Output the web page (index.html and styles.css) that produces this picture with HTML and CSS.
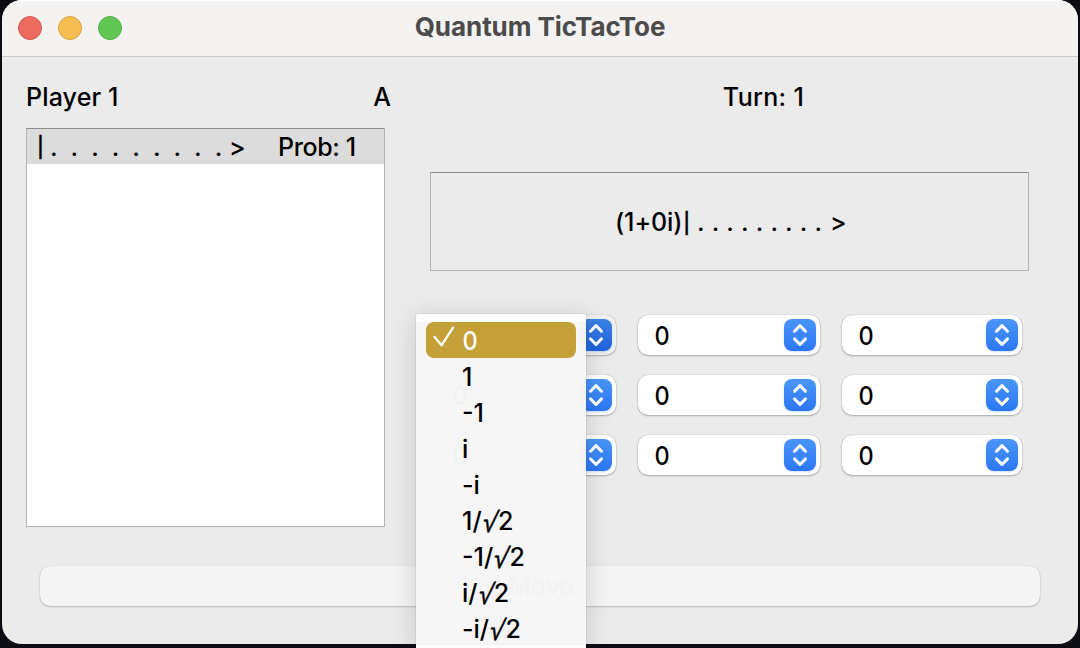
FILE: index.html
```html
<!DOCTYPE html>
<html lang="en">
<head>
<meta charset="utf-8">
<title>Quantum TicTacToe</title>
<link rel="stylesheet" href="styles.css">
</head>
<body>
<svg class="defs" width="0" height="0">
  <symbol id="arrows" viewBox="0 0 32 32">
    <path d="M10.5 12.2 L16 6.6 L21.5 12.2 M10.5 19.9 L16 25.5 L21.5 19.9"/>
  </symbol>
</svg>
<div class="window">
  <header class="titlebar">
    <div class="lights">
      <span class="light red"></span>
      <span class="light yellow"></span>
      <span class="light green"></span>
    </div>
    <h1 class="title">Quantum TicTacToe</h1>
  </header>
  <main class="content">
    <section class="left">
      <div class="labels"><span class="player">Player 1</span><span class="mark">A</span></div>
      <div class="list">
        <div class="row"><span class="bar">|</span><span class="dots">.........</span><span class="gt">&gt;</span><span class="prob">Prob: 1</span></div>
      </div>
    </section>
    <section class="right">
      <div class="turn">Turn: 1</div>
      <div class="state"><span class="amp">(1+0i)<span class="pipe">|</span></span><span class="state-dots">.........</span><span class="gt">&gt;</span></div>
      <div class="grid">
        <div class="combo pressed"><span class="value">0</span><svg class="step"><use href="#arrows"/></svg></div>
        <div class="combo"><span class="value">0</span><svg class="step"><use href="#arrows"/></svg></div>
        <div class="combo"><span class="value">0</span><svg class="step"><use href="#arrows"/></svg></div>
        <div class="combo"><span class="value">0</span><svg class="step"><use href="#arrows"/></svg></div>
        <div class="combo"><span class="value">0</span><svg class="step"><use href="#arrows"/></svg></div>
        <div class="combo"><span class="value">0</span><svg class="step"><use href="#arrows"/></svg></div>
        <div class="combo"><span class="value">0</span><svg class="step"><use href="#arrows"/></svg></div>
        <div class="combo"><span class="value">0</span><svg class="step"><use href="#arrows"/></svg></div>
        <div class="combo"><span class="value">0</span><svg class="step"><use href="#arrows"/></svg></div>
      </div>
    </section>
  </main>
  <div class="move"></div>
</div>
<div class="menu">
  <div class="item selected"><svg class="check" viewBox="0 0 24 24"><path d="M3.5 13 L10.5 21.3 L22 3.6"/></svg><span class="zero">0</span></div>
  <div class="item">1</div>
  <div class="item">-1</div>
  <div class="item">i</div>
  <div class="item">-i</div>
  <div class="item">1/<span class="root">√</span>2</div>
  <div class="item">-1/<span class="root">√</span>2</div>
  <div class="item">i/<span class="root">√</span>2<span class="ghost">Move</span></div>
  <div class="item">-i/<span class="root">√</span>2</div>
</div>
</body>
</html>
```
FILE: styles.css
```css
* { box-sizing: border-box; }
html, body { margin: 0; height: 100%; }
body {
  width: 1080px;
  height: 648px;
  overflow: hidden;
  position: relative;
  padding: 0 2px 4px;
  background: #0b0d12;
  font-family: Inter, "Liberation Sans", sans-serif;
  font-size: 25px;
  font-weight: 500;
  line-height: 30px;
  color: #000;
}
.defs { position: absolute; }
.window {
  height: 644px;
  border-radius: 20px;
  background: #ebebeb;
  overflow: hidden;
}
.titlebar {
  height: 57px;
  display: grid;
  grid-template-columns: 160px 1fr 160px;
  background: #f4f3f1;
  border-top: 1px solid #fff;
  border-bottom: 1px solid #c8c8c8;
}
.lights { display: flex; gap: 16px; padding: 15px 0 0 16px; }
.light { width: 24px; height: 24px; border-radius: 50%; border: 1px solid; }
.red { background: #ed6a5f; border-color: #d9574d; }
.yellow { background: #f6be50; border-color: #dba43c; }
.green { background: #62c655; border-color: #4fae43; }
.title {
  margin: 0;
  padding-top: 11px;
  font-size: 26px;
  font-weight: 700;
  line-height: 30px;
  text-align: center;
  color: #4b4b4b;
  letter-spacing: -0.05px;
}
.content { display: flex; gap: 45px; height: 509px; padding: 25px 49px 0 24px; }
.left { width: 359px; }
.labels { display: flex; justify-content: space-between; height: 46px; }
.player { letter-spacing: 0.15px; }
.mark { margin-right: -6px; }
.list {
  height: 399px;
  background: #fff;
  border: 1px solid #b4b4b4;
  border-top-color: #8c8c8c;
}
.row {
  display: flex;
  align-items: center;
  height: 35px;
  padding-left: 10px;
  background: #dcdcdc;
}
.bar, .pipe { font-size: 20px; line-height: 24px; -webkit-text-stroke: 0.4px currentColor; }
.bar { width: 13px; }
.dots { width: 179px; letter-spacing: 13px; white-space: nowrap; }
.gt { width: 20px; }
.prob { margin-left: 29px; letter-spacing: -0.4px; }
.right { width: 599px; }
.turn { height: 90px; padding-left: 68px; text-align: center; letter-spacing: 0.3px; }
.state {
  height: 99px;
  display: flex;
  align-items: center;
  padding-left: 184px;
  border: 1px solid #b4b4b4;
  border-top-color: #8c8c8c;
}
.amp { width: 82px; letter-spacing: -0.1px; white-space: nowrap; }
.pipe { position: relative; top: -1px; margin-left: 1px; }
.state-dots { width: 133px; letter-spacing: 7.1px; white-space: nowrap; }
.grid {
  display: grid;
  grid-template-columns: 180px 182px 180px;
  gap: 20px 22px;
  padding: 44px 0 0 6px;
}
.combo {
  display: flex;
  align-items: center;
  justify-content: space-between;
  height: 40px;
  padding: 0 4px 0 16px;
  border-radius: 10px;
  background: #fff;
  box-shadow: 0 0 1px rgba(0,0,0,.35), 0 1px 2px rgba(0,0,0,.25);
}
.value { margin-top: 2px; transform: scale(.94, 1.05); }
.zero { display: inline-block; transform: scale(.94, 1.05); }
.step {
  width: 32px;
  height: 32px;
  border-radius: 8px;
  background: linear-gradient(#4a96f8, #2b76f5);
  fill: none;
  stroke: #fff;
  stroke-width: 3;
  stroke-linecap: round;
  stroke-linejoin: round;
  box-shadow: 0 1px 2px rgba(60,130,246,.25);
}
.pressed { background: #f0f0f0; }
.pressed .step { background: linear-gradient(#3b82e4, #1f63dc); }
.move {
  width: 1000px;
  height: 40px;
  margin-left: 38px;
  border-radius: 10px;
  background: #f4f4f4;
  box-shadow: 0 0 1px rgba(0,0,0,.25), 0 1px 2px rgba(0,0,0,.2);
}
.menu {
  position: absolute;
  left: 416px;
  top: 314px;
  width: 170px;
  height: 340px;
  padding: 8px 10px;
  border-radius: 2px 2px 0 0;
  background: linear-gradient(#fff 8px, rgba(246,246,246,.982) 8px, rgba(246,246,246,.982) 331px, #fcfcfc 331px);
  box-shadow: 0 0 1px rgba(0,0,0,.5), 0 4px 26px rgba(0,0,0,.16);
}
.item {
  position: relative;
  height: 36px;
  padding: 4px 0 0 36px;
  white-space: nowrap;
}
.selected { border-radius: 8px; background: #c59f37; color: #fff; }
.root {
  display: inline-block;
  margin-right: 2px;
  font-family: "Liberation Sans", sans-serif;
  font-weight: 400;
  font-size: 26px;
  line-height: 20px;
  transform: translate(1px, 1px) skewX(-12deg) scaleY(1.08);
  -webkit-text-stroke: 0.5px currentColor;
}
.check {
  position: absolute;
  left: 5px;
  top: 2px;
  width: 24px;
  height: 24px;
  fill: none;
  stroke: #fff;
  stroke-width: 2.3;
  stroke-linecap: round;
  stroke-linejoin: round;
}
.ghost {
  position: absolute;
  left: 82px;
  top: -3px;
  color: #f2f2f2;
}
```
